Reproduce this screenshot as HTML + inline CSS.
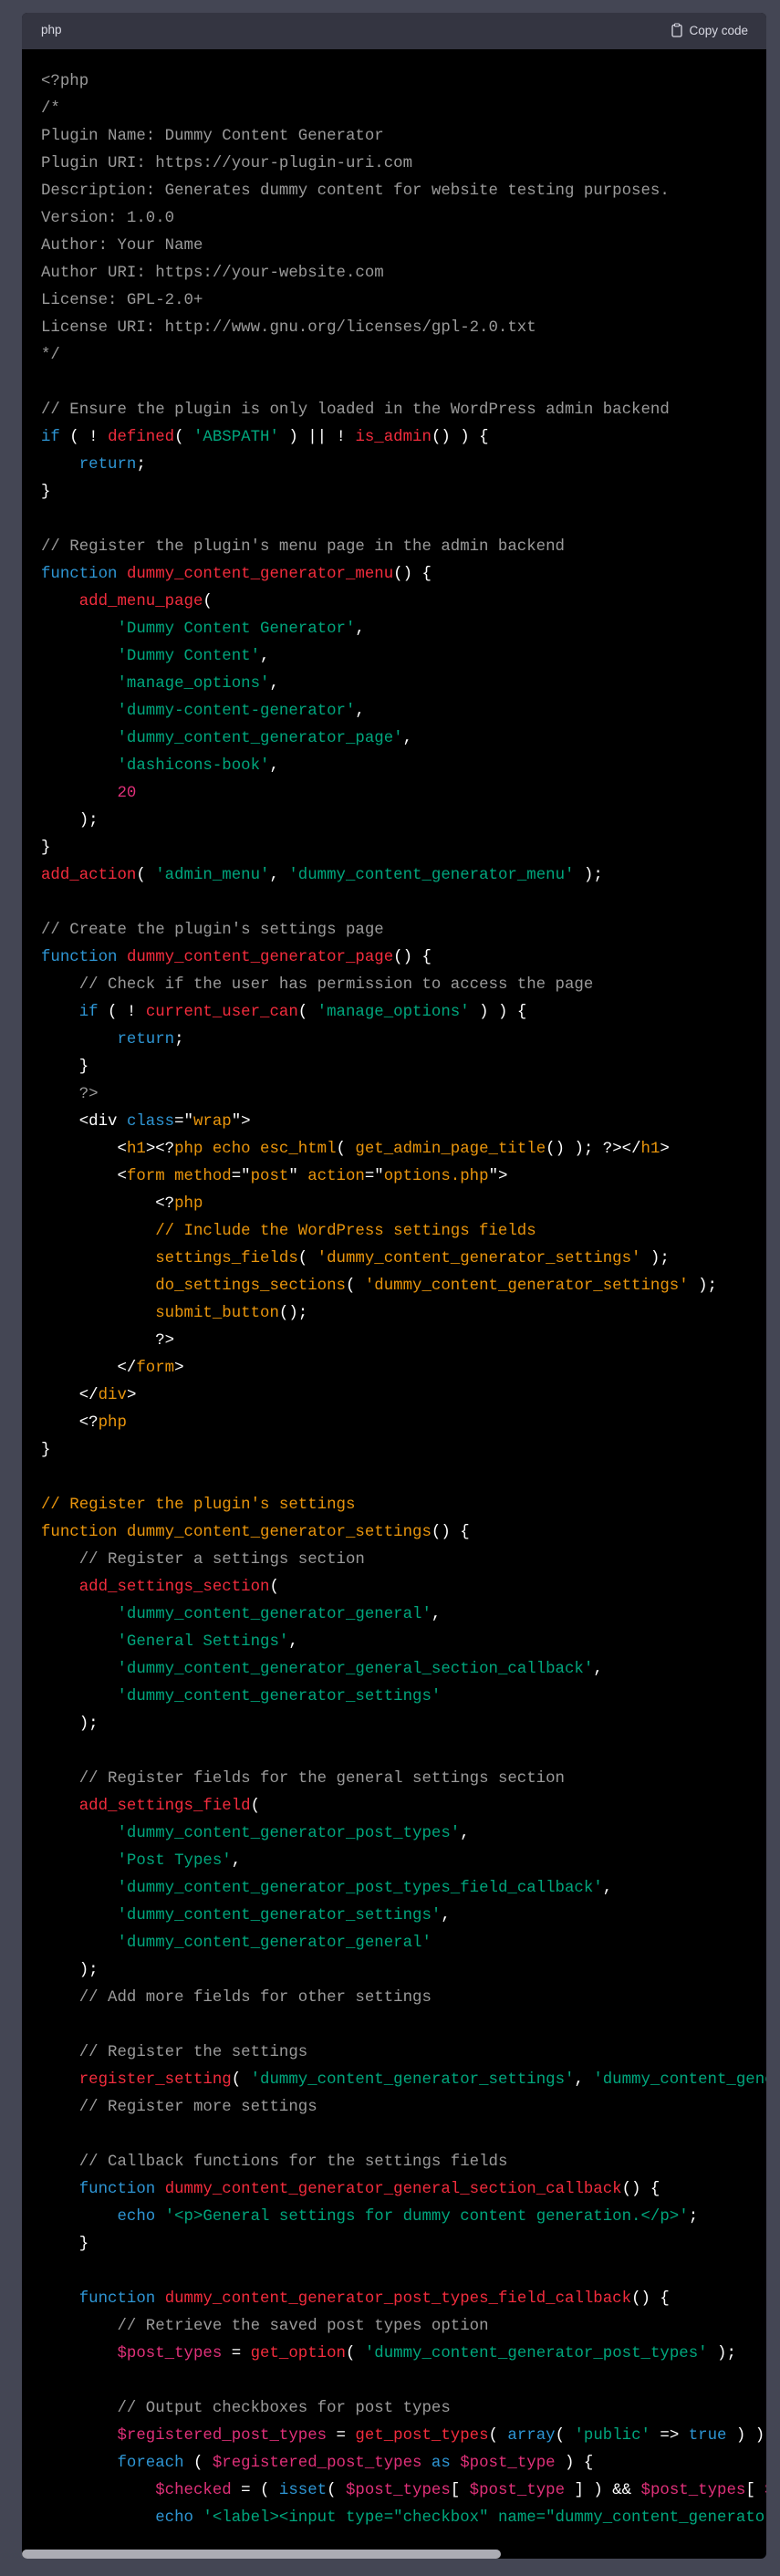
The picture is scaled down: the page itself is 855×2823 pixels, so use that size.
<!DOCTYPE html>
<html><head><meta charset="utf-8"><style>
html,body{margin:0;padding:0;background:#444654;width:855px;height:2823px;overflow:hidden}
.card{position:absolute;left:24px;top:14px;width:816px;height:2790px;background:#000;border-radius:6px;overflow:hidden}
.hd{height:40px;background:#343541;color:#d9d9e3;font:13.5px "Liberation Sans",sans-serif;position:relative}
.hd .l{position:absolute;left:21px;top:11px}
.hd .r{position:absolute;right:20px;top:11px;display:flex;align-items:center;gap:7px}
pre{margin:0;padding:21px 0 0 21px;font:17.4px/30px "Liberation Mono",monospace;color:#fff;white-space:pre}
.c{color:#9a9a9a}.k{color:#2e95d3}.f{color:#f22c3d}.s{color:#00a67d}.v{color:#df3079}.o{color:#e9950c}
.sb{position:absolute;left:0;bottom:0;width:525px;height:10px;background:#acacb4;border-radius:5px}
</style></head><body>
<div class="card">
<div class="hd"><span class="l">php</span><span class="r"><svg width="12" height="16" viewBox="0 0 12 16"><rect x="1" y="2.5" width="10" height="12.5" rx="1.5" fill="none" stroke="#d9d9e3" stroke-width="1.3"/><rect x="3.5" y="1" width="5" height="2.8" rx="0.8" fill="#343541" stroke="#d9d9e3" stroke-width="1.1"/></svg>Copy code</span></div>
<pre><span class="c">&lt;?php
/*
Plugin Name: Dummy Content Generator
Plugin URI: https://your-plugin-uri.com
Description: Generates dummy content for website testing purposes.
Version: 1.0.0
Author: Your Name
Author URI: https://your-website.com
License: GPL-2.0+
License URI: http://www.gnu.org/licenses/gpl-2.0.txt
*/</span>

<span class="c">// Ensure the plugin is only loaded in the WordPress admin backend</span>
<span class="k">if</span> ( ! <span class="f">defined</span>( <span class="s">'ABSPATH'</span> ) || ! <span class="f">is_admin</span>() ) {
    <span class="k">return</span>;
}

<span class="c">// Register the plugin's menu page in the admin backend</span>
<span class="k">function</span> <span class="f">dummy_content_generator_menu</span>() {
    <span class="f">add_menu_page</span>(
        <span class="s">'Dummy Content Generator'</span>,
        <span class="s">'Dummy Content'</span>,
        <span class="s">'manage_options'</span>,
        <span class="s">'dummy-content-generator'</span>,
        <span class="s">'dummy_content_generator_page'</span>,
        <span class="s">'dashicons-book'</span>,
        <span class="v">20</span>
    );
}
<span class="f">add_action</span>( <span class="s">'admin_menu'</span>, <span class="s">'dummy_content_generator_menu'</span> );

<span class="c">// Create the plugin's settings page</span>
<span class="k">function</span> <span class="f">dummy_content_generator_page</span>() {
    <span class="c">// Check if the user has permission to access the page</span>
    <span class="k">if</span> ( ! <span class="f">current_user_can</span>( <span class="s">'manage_options'</span> ) ) {
        <span class="k">return</span>;
    }
    <span class="c">?&gt;</span>
    &lt;div <span class="k">class</span>="<span class="o">wrap</span>"&gt;
        &lt;<span class="o">h1</span>&gt;&lt;?<span class="o">php echo esc_html</span>( <span class="o">get_admin_page_title</span>() ); ?&gt;&lt;/<span class="o">h1</span>&gt;
        &lt;<span class="o">form method</span>="<span class="o">post</span>" <span class="o">action</span>="<span class="o">options.php</span>"&gt;
            &lt;?<span class="o">php</span>
            <span class="o">// Include the WordPress settings fields</span>
            <span class="o">settings_fields</span>( <span class="o">'dummy_content_generator_settings'</span> );
            <span class="o">do_settings_sections</span>( <span class="o">'dummy_content_generator_settings'</span> );
            <span class="o">submit_button</span>();
            ?&gt;
        &lt;/<span class="o">form</span>&gt;
    &lt;/<span class="o">div</span>&gt;
    &lt;?<span class="o">php</span>
}

<span class="o">// Register the plugin's settings</span>
<span class="o">function dummy_content_generator_settings</span>() {
    <span class="c">// Register a settings section</span>
    <span class="f">add_settings_section</span>(
        <span class="s">'dummy_content_generator_general'</span>,
        <span class="s">'General Settings'</span>,
        <span class="s">'dummy_content_generator_general_section_callback'</span>,
        <span class="s">'dummy_content_generator_settings'</span>
    );

    <span class="c">// Register fields for the general settings section</span>
    <span class="f">add_settings_field</span>(
        <span class="s">'dummy_content_generator_post_types'</span>,
        <span class="s">'Post Types'</span>,
        <span class="s">'dummy_content_generator_post_types_field_callback'</span>,
        <span class="s">'dummy_content_generator_settings'</span>,
        <span class="s">'dummy_content_generator_general'</span>
    );
    <span class="c">// Add more fields for other settings</span>

    <span class="c">// Register the settings</span>
    <span class="f">register_setting</span>( <span class="s">'dummy_content_generator_settings'</span>, <span class="s">'dummy_content_generator_settings'</span> );
    <span class="c">// Register more settings</span>

    <span class="c">// Callback functions for the settings fields</span>
    <span class="k">function</span> <span class="f">dummy_content_generator_general_section_callback</span>() {
        <span class="k">echo</span> <span class="s">'&lt;p&gt;General settings for dummy content generation.&lt;/p&gt;'</span>;
    }

    <span class="k">function</span> <span class="f">dummy_content_generator_post_types_field_callback</span>() {
        <span class="c">// Retrieve the saved post types option</span>
        <span class="v">$post_types</span> = <span class="f">get_option</span>( <span class="s">'dummy_content_generator_post_types'</span> );

        <span class="c">// Output checkboxes for post types</span>
        <span class="v">$registered_post_types</span> = <span class="f">get_post_types</span>( <span class="k">array</span>( <span class="s">'public'</span> =&gt; <span class="k">true</span> ) );
        <span class="k">foreach</span> ( <span class="v">$registered_post_types</span> <span class="k">as</span> <span class="v">$post_type</span> ) {
            <span class="v">$checked</span> = ( <span class="k">isset</span>( <span class="v">$post_types</span>[ <span class="v">$post_type</span> ] ) &amp;&amp; <span class="v">$post_types</span>[ <span class="v">$post_type</span> ] ) ? <span class="s">'checked'</span> : <span class="s">''</span>;
            <span class="k">echo</span> <span class="s">'&lt;label&gt;&lt;input type="checkbox" name="dummy_content_generator_post_types[]"'</span>;
</pre>
<div class="sb"></div>
</div>
</body></html>
